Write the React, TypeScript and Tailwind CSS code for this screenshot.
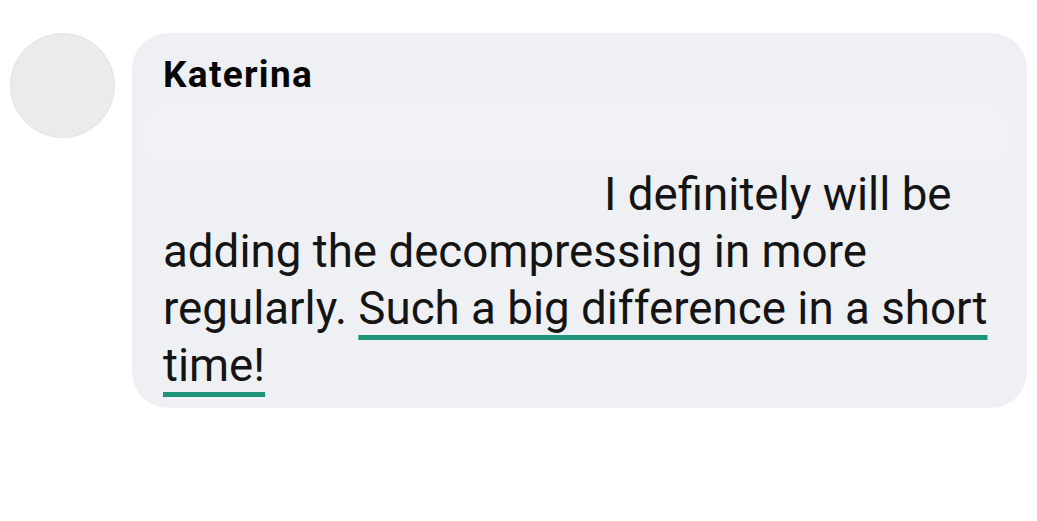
export default function App() {
  return (
    <div className="w-[1037px] h-[521px] bg-white flex items-start gap-[17px] pl-[10px] pt-[33px] font-['Roboto',sans-serif]">
      {/* Avatar */}
      <div className="w-[105px] h-[105px] rounded-full bg-[#eaecec] border border-[#e0e2e2] shrink-0" />

      {/* Comment bubble */}
      <div className="w-[895px] h-[375px] rounded-[36px] bg-[#eff0f4] pl-[31px] pr-[30px] pt-[22px]">
        <div className="text-[37px] leading-[40px] font-bold tracking-[1.3px] text-[#050505]">Katerina</div>
        <div className="mt-[10px] -ml-[20px] mr-[-12px] h-[57px] rounded-[24px] bg-[#f1f2f5]" />
        <p className="mt-[4px] text-[45.7px] leading-[57px] text-[#141414] indent-[441px] whitespace-nowrap">
          I definitely will be
          <br />
          adding the decompressing in more
          <br />
          regularly.{" "}
          <span className="underline decoration-[#1f9479] decoration-[5px] underline-offset-[11px] [text-decoration-skip-ink:none]">
            Such a big difference in a short
            <br />
            time!
          </span>
        </p>
      </div>
    </div>
  );
}
